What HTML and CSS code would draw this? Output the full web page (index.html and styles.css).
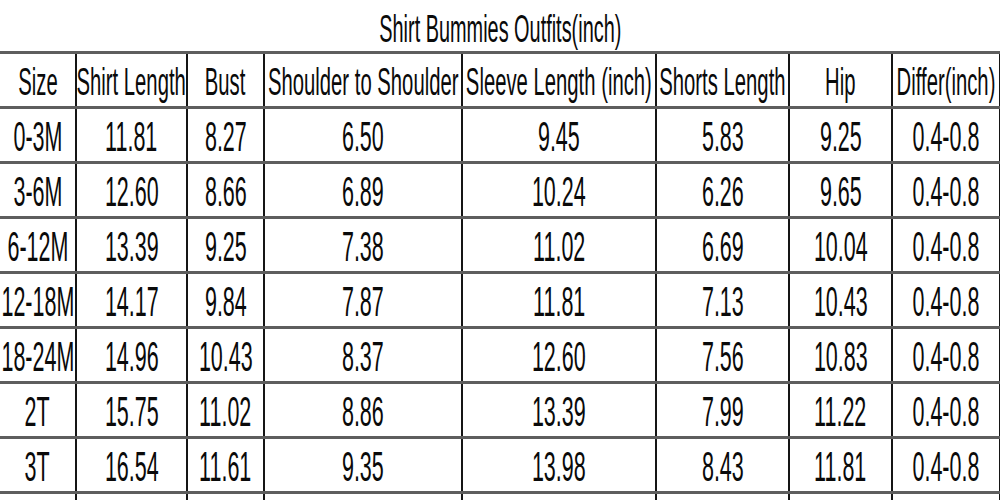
FILE: index.html
```html
<!DOCTYPE html>
<html>
<head>
<meta charset="utf-8">
<link rel="stylesheet" href="styles.css">
</head>
<body>
<div class="title"><span class="t">Shirt Bummies Outfits(inch)</span></div>
<table class="chart">
  <colgroup>
    <col class="c1"><col class="c2"><col class="c3"><col class="c4"><col class="c5"><col class="c6"><col class="c7"><col class="c8">
  </colgroup>
  <thead>
    <tr>
      <th><div class="cell"><span class="t">Size</span></div></th>
      <th><div class="cell"><span class="t">Shirt Length</span></div></th>
      <th><div class="cell"><span class="t">Bust</span></div></th>
      <th><div class="cell"><span class="t">Shoulder to Shoulder</span></div></th>
      <th><div class="cell"><span class="t">Sleeve Length (inch)</span></div></th>
      <th><div class="cell"><span class="t">Shorts Length</span></div></th>
      <th><div class="cell"><span class="t">Hip</span></div></th>
      <th><div class="cell"><span class="t">Differ(inch)</span></div></th>
    </tr>
  </thead>
  <tbody>
    <tr><td><div class="cell"><span class="t">0-3M</span></div></td><td><div class="cell"><span class="t">11.81</span></div></td><td><div class="cell"><span class="t">8.27</span></div></td><td><div class="cell"><span class="t">6.50</span></div></td><td><div class="cell"><span class="t">9.45</span></div></td><td><div class="cell"><span class="t">5.83</span></div></td><td><div class="cell"><span class="t">9.25</span></div></td><td><div class="cell"><span class="t">0.4-0.8</span></div></td></tr>
    <tr><td><div class="cell"><span class="t">3-6M</span></div></td><td><div class="cell"><span class="t">12.60</span></div></td><td><div class="cell"><span class="t">8.66</span></div></td><td><div class="cell"><span class="t">6.89</span></div></td><td><div class="cell"><span class="t">10.24</span></div></td><td><div class="cell"><span class="t">6.26</span></div></td><td><div class="cell"><span class="t">9.65</span></div></td><td><div class="cell"><span class="t">0.4-0.8</span></div></td></tr>
    <tr><td><div class="cell"><span class="t">6-12M</span></div></td><td><div class="cell"><span class="t">13.39</span></div></td><td><div class="cell"><span class="t">9.25</span></div></td><td><div class="cell"><span class="t">7.38</span></div></td><td><div class="cell"><span class="t">11.02</span></div></td><td><div class="cell"><span class="t">6.69</span></div></td><td><div class="cell"><span class="t">10.04</span></div></td><td><div class="cell"><span class="t">0.4-0.8</span></div></td></tr>
    <tr><td><div class="cell"><span class="t">12-18M</span></div></td><td><div class="cell"><span class="t">14.17</span></div></td><td><div class="cell"><span class="t">9.84</span></div></td><td><div class="cell"><span class="t">7.87</span></div></td><td><div class="cell"><span class="t">11.81</span></div></td><td><div class="cell"><span class="t">7.13</span></div></td><td><div class="cell"><span class="t">10.43</span></div></td><td><div class="cell"><span class="t">0.4-0.8</span></div></td></tr>
    <tr><td><div class="cell"><span class="t">18-24M</span></div></td><td><div class="cell"><span class="t">14.96</span></div></td><td><div class="cell"><span class="t">10.43</span></div></td><td><div class="cell"><span class="t">8.37</span></div></td><td><div class="cell"><span class="t">12.60</span></div></td><td><div class="cell"><span class="t">7.56</span></div></td><td><div class="cell"><span class="t">10.83</span></div></td><td><div class="cell"><span class="t">0.4-0.8</span></div></td></tr>
    <tr><td><div class="cell"><span class="t">2T</span></div></td><td><div class="cell"><span class="t">15.75</span></div></td><td><div class="cell"><span class="t">11.02</span></div></td><td><div class="cell"><span class="t">8.86</span></div></td><td><div class="cell"><span class="t">13.39</span></div></td><td><div class="cell"><span class="t">7.99</span></div></td><td><div class="cell"><span class="t">11.22</span></div></td><td><div class="cell"><span class="t">0.4-0.8</span></div></td></tr>
    <tr><td><div class="cell"><span class="t">3T</span></div></td><td><div class="cell"><span class="t">16.54</span></div></td><td><div class="cell"><span class="t">11.61</span></div></td><td><div class="cell"><span class="t">9.35</span></div></td><td><div class="cell"><span class="t">13.98</span></div></td><td><div class="cell"><span class="t">8.43</span></div></td><td><div class="cell"><span class="t">11.81</span></div></td><td><div class="cell"><span class="t">0.4-0.8</span></div></td></tr>
    <tr class="tail"><td></td><td></td><td></td><td></td><td></td><td></td><td></td><td></td></tr>
  </tbody>
</table>
</body>
</html>
```
FILE: styles.css
```css
html, body {
  margin: 0;
  padding: 0;
  background: #fff;
  overflow: hidden;
}
body {
  width: 1000px;
  height: 500px;
  font-family: "Liberation Sans", Arial, sans-serif;
  color: #0a0a0a;
}
.title {
  height: 51px;
  display: flex;
  justify-content: center;
  align-items: center;
  padding-top: 5px;
  box-sizing: border-box;
  font-size: 39px;
  line-height: 1;
  white-space: nowrap;
}
.t {
  display: inline-block;
  transform: scaleX(0.5);
  white-space: nowrap;
}
.title .t {
  transform: scaleX(0.51);
}
.chart {
  border-collapse: collapse;
  table-layout: fixed;
  width: 1000px;
  border-top: 3px solid #5e5e5e;
}
.c1 { width: 76px; }
.c2 { width: 111px; }
.c3 { width: 77px; }
.c4 { width: 198px; }
.c5 { width: 194px; }
.c6 { width: 133px; }
.c7 { width: 103px; }
.c8 { width: 108px; }
.chart th, .chart td {
  padding: 0;
  height: 52px;
  border-right: 2px solid #151515;
  border-bottom: 3px solid #5e5e5e;
  vertical-align: middle;
  overflow: visible;
}
.cell {
  display: flex;
  justify-content: center;
  align-items: center;
  line-height: 1;
  white-space: nowrap;
}
.chart th .cell {
  font-size: 39px;
  font-weight: normal;
  padding-top: 3px;
}
.chart th .t {
  transform: scaleX(0.52);
}
.chart td .cell {
  font-size: 43px;
  padding-top: 3px;
}
```
